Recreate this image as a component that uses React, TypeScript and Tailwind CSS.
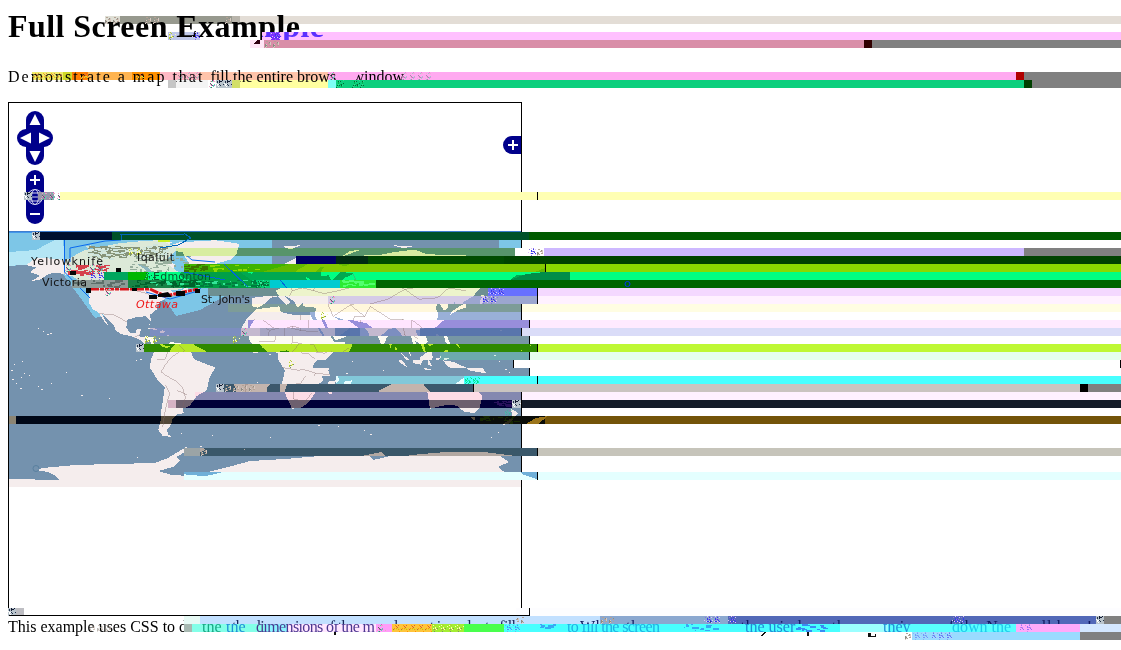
import React from "react";

const LAND: string[] = [
  "-168,66 -162,70.5 -156,71 -141,69.7 -128,70 -115,68.5 -108,68 -95,68 -94,72 -85,69.5 -82,68 -87,64 -94,60 -92,57 -82,55 -80,51.5 -78,55 -77,62 -70,60.5 -65,59 -62,57 -56,52 -60,50 -67,50 -65,47 -60,46 -66,43.7 -70,43 -71,41.5 -74,40.5 -76,37 -76,35 -81,31 -80,26 -82,28 -84,30 -90,29.5 -97,27.5 -97.5,22 -95,18.5 -91,18.5 -90,21 -87,21.3 -88.5,16 -83.5,15 -83.5,10.5 -81,9 -78,9 -80,7.5 -84,9 -87,13 -94,16 -101,17.5 -105.5,20.5 -106,23.5 -112.5,30 -114.5,31.5 -110,23 -112,25 -117,32.5 -121,35 -124,40 -124,48 -130,54 -135,58 -145,60.5 -152,60 -158,56 -165,54.5 -158,58.5 -165,61 -161,64.5",
  "-77,8 -72,12 -62,10.5 -52,5 -50,0 -44,-2.5 -35,-6 -39,-13 -41,-22 -48,-26 -53,-33 -58,-35 -57,-38 -62,-39 -65,-42 -66,-46 -69,-50 -68,-53 -65,-55 -72,-54 -75,-50 -73,-42 -73,-37 -70.5,-20 -76,-14 -81,-6 -80,0",
  "-73,78 -60,82 -35,83.5 -18,81 -20,74 -24,70 -38,66 -43,60 -50,62 -54,68 -58,75",
  "-17,21 -13,28 -6,35 10,37 11,33 20,31 32,31 37,22 43,12 51,12 48,5 40,-3 39,-8 41,-15 35,-20 35,-24 31,-30 26,-34 19,-35 14,-24 12,-17 14,-8 9,0 9,4 4,6 -8,4 -13,8 -17,14",
  "-9,43 -9,37 -5,36 0,39 4,43 9,44 15,38 18,40 13,45 20,41 23,36 27,40 27,37 36,36 35,31 39,21 44,13 52,16 60,22 56,25 48,30 57,27 66,25 72,20 77,8 80,15 87,21 92,22 97,16 99,8 103,1 101,8 100,13 105,9 109,12 106,20 114,22 121,28 122,31 120,36 122,40 126,34 129,36 128,40 135,44 140,50 137,54 143,59 155,59 157,51 163,59 170,60 180,64 180,69 160,70 140,73 125,73 113,74 105,77 90,75 80,73 70,73 68,69 55,69 44,68 40,65 33,67 40,67 30,70 22,71 12,66 5,62 6,58 11,59 13,55 18,60 22,65 25,65 22,61 29,60 22,57 19,54 9,54 5,53 -2,49 -4,48 -1,44",
  "114,-22 122,-18 130,-12 137,-12 136,-16 141,-17 142,-11 146,-19 153,-26 151,-34 147,-38 140,-37 135,-33 130,-32 124,-33 116,-35",
  "95,5 103,-2 106,-6 101,-3", "105,-6 114,-8 108,-8", "109,1 117,7 118,1 115,-4 110,-3", "120,1 125,1 121,-1 123,-5 120,-4",
  "131,-1 138,-2 147,-6 150,-10 143,-9 138,-8 133,-4", "120,18 122,17 124,12 126,7 121,12", "130,31 135,34 141,36 142,41 145,44 141,45 140,39 132,34",
  "-6,50 1,51 -2,56 -5,58 -4,54", "-10,52 -6,52 -6,55 -9,54", "-24,65 -14,65 -18,63.5", "44,-16 50,-15 47,-25 44,-24",
  "167,-46 174,-41 173,-35 178,-38 171,-46", "145,-41 148,-41 147,-43.5", "-85,22 -75,20 -78,22", "-74,20 -69,19 -74,18",
  "52,71 60,76 68,77 57,73", "12,79 25,80 18,77", "90,80 105,79 97,78", "-118,71 -105,73 -102,69 -116,69", "-90,83 -65,82 -78,76 -90,77 -84,79",
  "-88,73 -75,72 -62,66 -66,63 -78,64 -72,68", "-59,48 -55,51 -53,47", "-125,75 -120,74 -115,77", "80,9 82,7 80,6",
];

const BORDERS: string[] = [
  "M-141,70V60 M-124,49H-95L-83,46L-79,43L-67,45 M-117,32L-106,31L-97,26 M-92,15L-88,17",
  "M-60,5L-66,1L-70,-4L-73,-9L-69,-12L-62,-16L-58,-20L-56,-27L-58,-34 M-70,-18L-67,-24L-70,-35L-72,-48 M-72,10L-68,6L-70,0L-76,0 M-62,-22L-55,-25",
  "M-8,28L3,20L14,23L25,20V31 M25,20L37,19 M3,20L1,12L-10,12 M14,23L14,12L8,5 M14,12L23,10L26,4L30,4L35,0 M12,-6L24,-8L30,-10L40,-11 M20,-18V-28L28,-30L33,-24 M30,-10L25,-17L20,-18 M35,5L42,4L48,8",
  "M5,43L8,48L6,52 M14,54L15,50L23,48L24,54L30,56L28,60 M15,50L8,48 M23,48L30,46L40,48L48,50L60,53L75,54L87,49L75,42L60,38 M87,49L100,51L118,50L130,48 M87,49L97,42L110,43L118,50 M44,39L48,30L60,38L70,30L74,37L88,28L97,28L105,22 M61,25L63,30L70,30 M97,28L98,17L102,14",
];

const SPECKS = [
  [12, 379], [16, 383], [21, 377], [20, 388], [29, 375], [38, 386], [41, 389], [51, 383], [66, 372], [81, 395], [109, 398], [43, 331], [47, 334], [38, 328],
  [136, 360], [140, 359], [22, 361], [24, 373], [50, 333], [212, 435], [181, 433], [200, 446], [228, 449], [137, 457], [318, 425], [338, 426], [364, 430],
  [370, 434], [491, 437], [498, 432], [500, 330], [514, 345], [505, 350], [486, 355], [507, 361], [375, 370], [338, 373], [360, 361], [270, 437], [503, 424],
  [501, 372], [506, 376], [497, 369], [156, 329], [162, 330], [167, 335], [149, 324], [257, 382], [269, 354], [386, 322], [14, 364], [11, 370],
];

/* small repeatable scatter of rectangles inside a region */
function scatter(n: number, x: number, y: number, w: number, h: number, seed: number) {
  let s = seed;
  const next = () => (s = (s * 16807) % 2147483647) / 2147483647;
  return Array.from({ length: n }, () => [Math.round(x + next() * w), Math.round(y + next() * h), 1 + Math.round(next() * 5), 1 + Math.round(next())]);
}

function Scatter({ n, x, y, w, h, seed, fill }: { n: number; x: number; y: number; w: number; h: number; seed: number; fill: string }) {
  return (
    <g fill={fill}>
      {scatter(n, x, y, w, h, seed).map(([a, b, c, d], i) => (
        <rect key={i} x={a} y={b} width={c} height={d} />
      ))}
    </g>
  );
}

function World({ land }: { land: string }) {
  return (
    <g>
      <g transform="translate(265 359) scale(1.4222 -1.4222)">
        {LAND.map((p, i) => (
          <polygon key={i} points={p} fill={land} />
        ))}
        {BORDERS.map((d, i) => (
          <path key={i} d={d} fill="none" stroke="#806464" strokeOpacity=".42" strokeWidth=".6" />
        ))}
      </g>
      <path
        fill={land}
        d="M9 479L60 480L54 475L48 472L36 470L42 468L75 465L112 464L155 463L168 458L178 452L186 447L189 450L176 457L180 461L173 467L158 471L172 475L190 476L212 471L232 466L250 461L285 459L320 456L345 456L365 452L373 460L395 455L430 452L468 452L500 456L509 462L498 467L508 475L521 479V487H9Z"
      />
      <g fill={land}>
        {SPECKS.map(([x, y], i) => (
          <rect key={i} x={x} y={y} width={i % 3 ? 1 : 2} height="1" />
        ))}
      </g>
    </g>
  );
}

type Band = { y: number; x: number; end: number; sea: string; land: string; right: string; dx?: number; edge?: boolean };

const BANDS: Band[] = [
  { y: 288, x: 208, end: 537, sea: "#6d8f92", land: "#edf4cb", right: "#f4d8ff", dx: 16 },
  { y: 296, x: 328, end: 537, sea: "#9ca6d0", land: "#d5cbe7", right: "#fff1ff", dx: 16 },
  { y: 304, x: 228, end: 521, sea: "#7d9c98", land: "#fff7db", right: "#fffde2" },
  { y: 312, x: 310, end: 521, sea: "#99b0d8", land: "#fffdff", right: "#ffffff" },
  { y: 320, x: 248, end: 529, sea: "#988edb", land: "#ffe5ff", right: "#ffeaff", dx: 8 },
  { y: 328, x: 150, end: 521, sea: "#7c8ec0", land: "#c4b9cf", right: "#dadcf8" },
  { y: 336, x: 145, end: 529, sea: "#7796a4", land: "#fdfbf2", right: "#ffffff", dx: 8 },
  { y: 344, x: 144, end: 537, sea: "#2e8900", land: "#b6e827", right: "#bef834", dx: 16 },
  { y: 352, x: 440, end: 529, sea: "#6caaac", land: "#dcf2e4", right: "#e5ffee", dx: 8 },
  { y: 360, x: 290, end: 513, sea: "#7593ae", land: "#f5eded", right: "#ffffff", dx: -8 },
  { y: 368, x: 300, end: 529, sea: "#7593ae", land: "#f5eded", right: "#ffffff", dx: 8 },
  { y: 376, x: 336, end: 537, sea: "#82c8d9", land: "#e8fcff", right: "#48ffff", dx: 16 },
  { y: 384, x: 220, end: 473, sea: "#3c586c", land: "#c3b4ad", right: "#cac4c0", dx: -48 },
  { y: 392, x: 195, end: 521, sea: "#8488b0", land: "#fddce6", right: "#fff1ff" },
  { y: 400, x: 176, end: 521, sea: "#000038", land: "#6d606e", right: "#141c28" },
  { y: 416, x: 16, end: 545, sea: "#000818", land: "#544939", right: "#735409", edge: false },
  { y: 448, x: 200, end: 537, sea: "#3a586a", land: "#b2a8a2", right: "#c6c4ba", dx: 16 },
  { y: 472, x: 184, end: 537, sea: "#70b0d8", land: "#e4ffff", right: "#e4ffff", dx: 16 },
  { y: 248, x: 176, end: 515, sea: "#57946b", land: "#d8eda0", right: "#ffffff", edge: false },
  { y: 264, x: 184, end: 545, sea: "#63b900", land: "#83c900", right: "#8ada00", dx: 24 },
  { y: 272, x: 104, end: 569, sea: "#00a952", land: "#00ff83", right: "#00ff83", dx: 48 },
];

function MapBand({ y, x, end, sea, land, right, dx = 0, edge = true }: Band) {
  return (
    <g>
      <rect x={end} y={y} width={1121 - end} height="8" fill={right} />
      <svg x={x} y={y} width={end - x} height="8" viewBox={`${x} ${y} ${end - x} 8`}>
        <rect x={x} y={y} width={end - x} height="8" fill={sea} />
        <g transform={`translate(${dx} 0)`}>
          <World land={land} />
        </g>
      </svg>
      {edge && <rect x={end} y={y} width="1" height="8" fill="#000" />}
    </g>
  );
}

/* x, y, width, colour of each 8px-high block run */
const RUNS: [number, number, number, string][] = [
  [40, 232, 72, "#00102f"], [112, 232, 417, "#005229"], [529, 232, 592, "#005b00"],
  [544, 248, 480, "#cdb8ff"], [1024, 248, 97, "#808080"],
  [296, 256, 40, "#000067"], [336, 256, 32, "#002b12"], [368, 256, 136, "#004b00"], [504, 256, 617, "#004300"],
  [104, 272, 24, "#00a65e"], [128, 272, 20, "#00b700"],
  [72, 280, 56, "#8d9c98"], [128, 280, 66, "#188446"], [194, 280, 76, "#00ce76"], [270, 280, 70, "#00cbd0"], [340, 280, 36, "#2cea32"], [376, 280, 745, "#006500"],
  [488, 288, 49, "#6870ff"],
  [464, 376, 657, "#48ffff"], [1080, 384, 8, "#000000"], [1088, 384, 33, "#808080"],
  [60, 192, 1061, "#ffffb3"],
  [38, 192, 16, "#9996aa"], [168, 400, 8, "#d5b2c4"], [9, 416, 7, "#8b8473"], [184, 448, 16, "#9ba4a6"],
];

const NOISE: [number, number, number, string][] = [
  [24, 192, 8, "n1"], [40, 192, 20, "n2"], [32, 232, 8, "n1"], [128, 248, 16, "n3"], [528, 248, 8, "n4"], [536, 248, 8, "n5"],
  [64, 264, 8, "n2"], [88, 264, 16, "n2"], [88, 272, 16, "n4"], [144, 272, 12, "n6"], [104, 288, 8, "n2"],
  [256, 280, 12, "n6"], [488, 288, 16, "n4"], [328, 296, 8, "n2"], [480, 296, 18, "n4"],
  [320, 312, 8, "n3"], [240, 328, 8, "n2"], [144, 336, 16, "n3"], [232, 336, 8, "n3"], [136, 344, 8, "n1"], [288, 360, 8, "n3"],
  [464, 376, 16, "n8"], [216, 384, 8, "n1"], [225, 384, 30, "n5"], [512, 400, 9, "n1"],
  [200, 448, 8, "n5"], [8, 608, 8, "n1"],
];

const TITLE = "Full Screen Example";

function Noise({ id, c, bg }: { id: string; c: string[]; bg?: string }) {
  return (
    <pattern id={id} width="8" height="8" patternUnits="userSpaceOnUse">
      {bg && <rect width="8" height="8" fill={bg} />}
      {scatter(22, 0, 0, 7, 7, id.charCodeAt(1) * 977).map(([x, y], i) => (
        <rect key={i} x={x} y={y} width="1" height="1" fill={c[i % c.length]} />
      ))}
    </pattern>
  );
}

function Row({ y, x, end, children }: { y: number; x: number; end: number; children?: React.ReactNode }) {
  return (
    <svg x={x} y={y} width={end - x} height="8" viewBox={`${x} ${y} ${end - x} 8`}>
      {children}
    </svg>
  );
}

function Overlay() {
  const serif = "font-['Liberation_Serif',serif] text-[16px]";
  return (
    <svg className="pointer-events-none absolute left-0 top-0" width="1121" height="650" viewBox="0 0 1121 650" shapeRendering="crispEdges" aria-hidden="true">
      <defs>
        <Noise id="n1" c={["#101830", "#203048", "#fff"]} bg="#b9c4cc" />
        <Noise id="n2" c={["#d65ac4", "#e9a9bd", "#58626d", "#50dcb0"]} />
        <Noise id="n3" c={["#b5cc33", "#ffffb4", "#7b945e"]} />
        <Noise id="n4" c={["#3737f2", "#8b72da", "#e0c1ff"]} />
        <Noise id="n5" c={["#b4a295", "#d6c9c2", "#8e8b83"]} />
        <Noise id="n6" c={["#006a37", "#00b44e", "#35de91"]} />
        <Noise id="n7" c={["#ff9500", "#d45b35", "#d8d830"]} />
        <Noise id="n8" c={["#00e080", "#10f0b0"]} />
      </defs>
      {/* heading rows */}
      <g className="mix-blend-multiply">
        <rect x="105" y="16" width="15" height="8" fill="#deded4" />
        <rect x="120" y="16" width="112" height="8" fill="#97998e" />
        <rect x="232" y="16" width="8" height="8" fill="#b8b4ab" />
        <rect x="240" y="16" width="881" height="8" fill="#e3ddd6" />
        <rect x="168" y="32" width="32" height="8" fill="#c0c8e8" />
      </g>
      <rect x="105" y="16" width="15" height="8" fill="url(#n5)" />
      <rect x="145" y="16" width="14" height="8" fill="url(#n5)" />
      <rect x="225" y="16" width="8" height="8" fill="url(#n5)" />
      <Row y={32} x={262} end={1121}>
        <rect x="262" y="32" width="859" height="8" fill="#ffc0ff" />
        <text x="32" y="37" textLength="292" fill="#5a30ff" className="font-['Liberation_Serif',serif] text-[32px] font-bold">{TITLE}</text>
      </Row>
      <rect x="168" y="32" width="8" height="8" fill="url(#n3)" />
      <rect x="271" y="32" width="9" height="8" fill="#7b2dff" />
      <rect x="271" y="32" width="9" height="8" fill="url(#n4)" />
      <rect x="192" y="32" width="8" height="8" fill="url(#n4)" />
      <rect x="250" y="40" width="14" height="8" fill="#ffe6f6" />
      <rect x="264" y="40" width="600" height="8" fill="#d98ea8" />
      <path d="M254 44L257 40H260V44Z" fill="#300010" />
      <rect x="264" y="40" width="16" height="8" fill="url(#n5)" />
      <rect x="864" y="40" width="8" height="8" fill="#300000" />
      <rect x="872" y="40" width="249" height="8" fill="#808080" />
      {/* subtitle rows */}
      <g className="mix-blend-multiply">
        <rect x="32" y="72" width="31" height="8" fill="#f0ed6d" />
        <rect x="63" y="72" width="9" height="8" fill="#d0d827" />
        <rect x="72" y="72" width="16" height="8" fill="#ff7d00" />
        <rect x="88" y="72" width="44" height="8" fill="#ffb450" />
        <rect x="132" y="72" width="28" height="8" fill="#ff9000" />
        <rect x="160" y="72" width="40" height="8" fill="#ffb8c4" />
        <rect x="200" y="72" width="128" height="8" fill="#ffc4aa" />
        <rect x="328" y="72" width="688" height="8" fill="#ffaaf0" />
        <rect x="168" y="80" width="40" height="8" fill="#f4f4f4" />
        <rect x="240" y="80" width="88" height="8" fill="#ffffa0" />
      </g>
      <rect x="328" y="80" width="8" height="8" fill="#7dfff5" />
      <rect x="336" y="80" width="688" height="8" fill="#0ccf7d" />
      <rect x="336" y="72" width="20" height="8" fill="#ffaaf0" />
      <rect x="32" y="72" width="30" height="8" fill="url(#n7)" opacity=".7" />
      <rect x="80" y="72" width="8" height="8" fill="url(#n7)" />
      <rect x="136" y="72" width="8" height="8" fill="url(#n7)" />
      <rect x="176" y="72" width="24" height="8" fill="url(#n2)" opacity=".5" />
      <rect x="328" y="72" width="8" height="8" fill="url(#n2)" />
      <rect x="400" y="72" width="32" height="8" fill="url(#n2)" opacity=".5" />
      <rect x="168" y="80" width="8" height="8" fill="#c6c6c6" />
      <rect x="208" y="80" width="8" height="8" fill="url(#n2)" />
      <rect x="216" y="80" width="16" height="8" fill="url(#n1)" />
      <rect x="232" y="80" width="8" height="8" fill="#d2df68" />
      <rect x="336" y="80" width="8" height="8" fill="url(#n6)" />
      <rect x="352" y="80" width="12" height="8" fill="url(#n6)" />
      <rect x="1016" y="72" width="8" height="8" fill="#b00000" />
      <rect x="1024" y="80" width="8" height="8" fill="#004000" />
      <path d="M1024 72H1121V88H1032V80H1024Z" fill="#808080" />
      {/* map rows */}
      {BANDS.map((b) => <MapBand key={b.y} {...b} />)}
      <path d="M260 328H350V336H260Z" fill="#4a6ba4" opacity=".25" />
      <path d="M335 328H360V336H335ZM420 328H521V336H420Z" fill="#4a6ba4" opacity=".7" />
      {RUNS.map(([x, y, w, c], i) => <rect key={i} x={x} y={y} width={w} height="8" fill={c} />)}
      <path d="M184 264H290L262 272H184Z" fill="#3fb400" />
      <Scatter n={24} x={184} y={264} w={20} h={6} seed={91} fill="#3d7300" />
      <Scatter n={14} x={210} y={264} w={60} h={6} seed={17} fill="#8fd800" />
      <path d="M160 280H188L200 272H240L262 288H182Z" fill="#00a048" />
      <Scatter n={60} x={132} y={280} w={64} h={6} seed={7} fill="#00622c" />
      <Scatter n={44} x={198} y={280} w={66} h={6} seed={12} fill="#007c40" />
      <Scatter n={20} x={150} y={280} w={110} h={6} seed={33} fill="#34e498" />
      <Scatter n={26} x={342} y={280} w={28} h={6} seed={23} fill="#52ff6e" />
      <Scatter n={24} x={74} y={280} w={48} h={6} seed={41} fill="#5d6f6a" />
      <Scatter n={20} x={480} y={416} w={34} h={6} seed={19} fill="#204a00" />
      <Scatter n={20} x={494} y={400} w={18} h={6} seed={25} fill="#28105c" />
      <rect x="480" y="416" width="65" height="8" fill="#101000" opacity=".6" />
      <rect x="504" y="408" width="8" height="8" fill="url(#n8)" opacity=".35" />
      {NOISE.map(([x, y, w, n], i) => <rect key={i} x={x} y={y} width={w} height="8" fill={`url(#${n})`} />)}
      <path d="M537.5 192V200M537.5 288V296M545.500 264V272M537.5 376V384M1120.5 360V368" stroke="#000" />
      <path d="M184 272L225 280M224 264L248 287M280 280L287 288" stroke="#0067db" fill="none" />
      <path d="M510 280L526 274L544 272H570V280Z" fill="#008d49" />
      <path d="M526 424L536 418L548 416L538 424Z" fill="#9b741a" />
      <path d="M121 240V235L185 234L191 238L178 245L160 248" stroke="#0066ba" fill="none" />
      <path d="M158 240H170V242H158Z" fill="#c7ef24" />
      <circle cx="627.500" cy="284" r="2.5" fill="none" stroke="#0032ff" shapeRendering="auto" />
      {/* frame bottom row */}
      <rect x="516" y="608" width="605" height="8" fill="#fdfdff" />
      <path d="M9 615.5H529.5V608" stroke="#000" fill="none" />
      <rect x="16" y="608" width="8" height="7" fill="#bebec3" />
      {/* note rows */}
      <Row y={616} x={184} end={1121}>
        <rect x="184" y="616" width="16" height="8" fill="#e6f9f4" />
        <rect x="200" y="616" width="400" height="8" fill="#c2e0ff" />
        <rect x="600" y="616" width="128" height="8" fill="#8ba8d0" />
        <rect x="728" y="616" width="368" height="8" fill="#5268b8" />
        <text x="232" y="632" textLength="284" fill="#182458" className={serif}>the dimensions of the map element in order to fill</text>
        <text x="580" y="632" textLength="340" fill="#101c60" className={serif}>When the user resizes the window, the map size</text>
        <text x="940" y="632" textLength="152" fill="#101860" className={serif}>of the No scroll bars!</text>
        <rect x="1096" y="616" width="25" height="8" fill="#808080" />
      </Row>
      <Row y={624} x={184} end={1121}>
        <rect x="184" y="624" width="8" height="8" fill="#a7b8b1" />
        <rect x="192" y="624" width="72" height="8" fill="#83ffe8" />
        <rect x="264" y="624" width="24" height="8" fill="#8bf4ff" />
        <rect x="288" y="624" width="88" height="8" fill="#ffe6ff" />
        <rect x="376" y="624" width="16" height="8" fill="#ff9cf8" />
        <rect x="392" y="624" width="40" height="8" fill="#ffc43b" />
        <rect x="432" y="624" width="32" height="8" fill="#a3ee32" />
        <rect x="464" y="624" width="40" height="8" fill="#49ff4d" />
        <rect x="504" y="624" width="336" height="8" fill="#48ffff" />
        <rect x="840" y="624" width="48" height="8" fill="#9cffff" />
        <rect x="888" y="624" width="128" height="8" fill="#59ffff" />
        <rect x="1016" y="624" width="64" height="8" fill="#ffaafa" />
        <rect x="1080" y="624" width="41" height="8" fill="#d4e7ff" />
        <g className={serif}>
          <text x="202" y="632" fill="#18a884">the</text>
          <text x="226" y="632" fill="#1e8ed8">the</text>
          <text x="256" y="632" textLength="119" fill="#4c3890">dimensions of the m</text>
          <text x="567" y="632" textLength="93" fill="#20b0e4">to fill the screen</text>
          <text x="745" y="632" fill="#208cd8">the user</text>
          <text x="883" y="632" fill="#2090d8">they</text>
          <text x="952" y="632" fill="#20c8ec">down the</text>
        </g>
      </Row>
      <g fill="#111">
        <path d="M334 632H336V635H334ZM764 632H766L763 636H761ZM807 632H809V636H807ZM868 633H871V636H875V634H876V637H868Z" />
      </g>
      <Scatter n={16} x={684} y={624} w={30} h={6} seed={57} fill="#38a8f4" />
      <Scatter n={16} x={796} y={624} w={30} h={6} seed={58} fill="#388cf4" />
      <Scatter n={10} x={540} y={624} w={14} h={4} seed={59} fill="#38a8f4" />
      <rect x="704" y="616" width="16" height="8" fill="url(#n4)" />
      <rect x="728" y="616" width="8" height="8" fill="url(#n4)" />
      <rect x="600" y="616" width="14" height="8" fill="url(#n5)" />
      <rect x="516" y="616" width="8" height="8" fill="url(#n5)" />
      <rect x="952" y="616" width="12" height="8" fill="url(#n4)" />
      <rect x="1096" y="616" width="8" height="8" fill="url(#n1)" />
      <rect x="376" y="624" width="10" height="8" fill="url(#n2)" />
      <rect x="392" y="624" width="40" height="8" fill="url(#n7)" />
      <rect x="432" y="624" width="32" height="8" fill="url(#n3)" />
      <rect x="504" y="624" width="16" height="8" fill="url(#n4)" opacity=".5" />
      <rect x="1020" y="624" width="12" height="8" fill="url(#n4)" opacity=".5" />
      <rect x="90" y="624" width="22" height="8" fill="url(#n5)" opacity=".6" />
      <rect x="912" y="632" width="168" height="8" fill="#9adbff" />
      <rect x="904" y="632" width="8" height="8" fill="url(#n5)" />
      <rect x="912" y="632" width="16" height="8" fill="url(#n4)" opacity=".4" />
      <rect x="932" y="632" width="20" height="8" fill="url(#n4)" opacity=".6" />
      <rect x="1080" y="632" width="41" height="8" fill="#808080" />
      {/* place names */}
      <g className="font-['DejaVu_Sans',sans-serif] text-[11px]" fill="#111">
        <text x="31" y="265" textLength="72">Yellowknife</text>
        <text x="42" y="286" textLength="45">Victoria</text>
        <text x="137" y="261" textLength="37">Iqaluit</text>
        <text x="153" y="280" textLength="58" fill="#07572c">Edmonton</text>
        <text x="201" y="303" textLength="49">St. John's</text>
        <text x="136" y="308" fill="#ef1616" fontStyle="italic" textLength="42">Ottawa</text>
      </g>
    </svg>
  );
}

function MapView() {
  return (
    <svg className="block" width="512" height="512" viewBox="9 103 512 512">
      <g shapeRendering="crispEdges">
        <rect x="9" y="231" width="512" height="256" fill="#7492ae" />
        <path d="M9 232H521V266H499V240H272V270L200 310L176 316L165 300L95 318L60 270L36 264L9 266Z" fill="#7dc6e7" />
        <path d="M272 240H499V270H272Z" fill="#7492ae" />
        <path d="M9 252L36 250L62 236L66 262L34 264L9 266Z" fill="#b4e6f5" />
        <path d="M200 310L215 303L280 296L272 270L521 266V330H200ZM165 300L176 316L200 310V330H160Z" fill="#7492ae" />
        <World land="#f5eded" />
        <path d="M66 260L85 250L120 243L160 240L178 248L165 262L196 285L176 290L160 291L150 288H88L78 280L66 272Z" fill="#dce9d8" />
        <Scatter n={170} x={88} y={246} w={76} h={11} seed={5} fill="#87947a" />
        <Scatter n={70} x={86} y={244} w={80} h={14} seed={77} fill="#cfe5de" />
        <Scatter n={60} x={130} y={256} w={56} h={16} seed={29} fill="#96ad9c" />
        <path d="M137 264L146 270L142 284L151 288L155 276L149 268Z" fill="#8bb4bd" />
        <Scatter n={60} x={68} y={264} w={38} h={10} seed={13} fill="#d5404c" />
      </g>
      <path d="M9 232H521M64.500 232V272L82 290L90 298M70 262V248L105 241L121 240V233H190M178 248L192 260L215 262M146 292L170 299L198 291L208 280" fill="none" stroke="#0869ef" />
      <path d="M90 289H150L165 296L198 289" fill="none" stroke="#d9161c" strokeWidth="3" strokeDasharray="9 1 4 1" />
      <g fill="#050505">
        <rect x="70" y="271" width="6" height="4" /><rect x="116" y="268" width="5" height="4" /><rect x="86" y="288" width="5" height="5" />
        <rect x="132" y="287" width="5" height="4" /><rect x="149" y="295" width="8" height="4" /><path d="M158 294L168 292L172 297H158ZM176 291H185V296H176ZM195 289H200V293H195Z" />
      </g>
      {/* pan and zoom controls */}
      <g fill="#00008b">
        <rect x="26" y="111" width="18" height="54" rx="9" />
        <rect x="17" y="129" width="36" height="18" rx="9" />
        <rect x="26" y="170" width="18" height="54" rx="9" />
        <path d="M521 136H512A9 9 0 0 0 512 154H521Z" />
      </g>
      <path d="M35 114L40.500 125H29.500ZM35 162L40.500 151H29.500ZM20 138L31 132.500V143.500ZM50 138L39 132.500V143.500Z" fill="#fff" />
      <path d="M30 180H40M35 175V185M30 214H40M508 145H518M513 140V150" stroke="#fff" strokeWidth="2" />
      <g fill="none" stroke="#d5d5ef">
        <circle cx="35" cy="197" r="7.500" /><ellipse cx="35" cy="197" rx="3.500" ry="7.500" /><path d="M27 197H43M29 193H41M29 201H41" />
      </g>
      <circle cx="36" cy="468.500" r="3" fill="none" stroke="#59809f" />
    </svg>
  );
}

export default function App() {
  return (
    <div className="relative h-[650px] w-[1121px] overflow-hidden bg-white px-2 pt-2 font-['Liberation_Serif',serif] text-black">
      <h1 className="h-[37px] whitespace-nowrap text-[32px] font-bold leading-[37px] tracking-[0.45px]">{TITLE}</h1>
      <p className="mt-[23px] h-[18px] whitespace-nowrap text-[16px] leading-[18px]">
        <span className="tracking-[2px]">Demonstrate a map that </span>fill the entire browser window.
      </p>
      <div className="mt-[16px] h-[514px] w-[514px] border border-black">
        <MapView />
      </div>
      <p className="mt-[2px] whitespace-nowrap text-[16px] leading-[18px]">This example uses CSS to define</p>
      <Overlay />
    </div>
  );
}
